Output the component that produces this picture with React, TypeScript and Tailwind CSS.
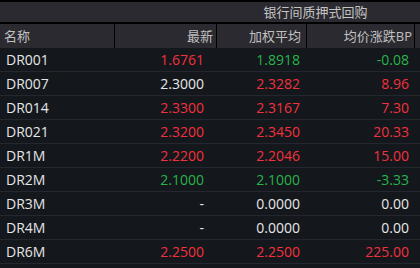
import React from "react";

type Row = { name: string; last: string; lastC: string; avg: string; avgC: string; bp: string; bpC: string };

const R = "text-[#f0323c]";
const G = "text-[#27b54a]";
const W = "text-[#e8e8e8]";

const rows: Row[] = [
  { name: "DR001", last: "1.6761", lastC: R, avg: "1.8918", avgC: G, bp: "-0.08", bpC: G },
  { name: "DR007", last: "2.3000", lastC: W, avg: "2.3282", avgC: R, bp: "8.96", bpC: R },
  { name: "DR014", last: "2.3300", lastC: R, avg: "2.3167", avgC: R, bp: "7.30", bpC: R },
  { name: "DR021", last: "2.3200", lastC: R, avg: "2.3450", avgC: R, bp: "20.33", bpC: R },
  { name: "DR1M", last: "2.2200", lastC: R, avg: "2.2046", avgC: R, bp: "15.00", bpC: R },
  { name: "DR2M", last: "2.1000", lastC: G, avg: "2.1000", avgC: G, bp: "-3.33", bpC: G },
  { name: "DR3M", last: "-", lastC: W, avg: "0.0000", avgC: W, bp: "0.00", bpC: W },
  { name: "DR4M", last: "-", lastC: W, avg: "0.0000", avgC: W, bp: "0.00", bpC: W },
  { name: "DR6M", last: "2.2500", lastC: R, avg: "2.2500", avgC: R, bp: "225.00", bpC: R },
];

const font = { fontFamily: '"Open Sans", "Noto Sans CJK SC", sans-serif' };

export default function App() {
  return (
    <div className="w-[420px] h-[268px] bg-[#14171c] overflow-hidden" style={font}>
      <div className="bg-black pt-[2px] flex flex-col gap-[2px]">
        <div className="h-[20px] bg-[#2b2a30] flex">
          <div className="w-[217px]" />
          <div className="w-[197px] flex items-center justify-center text-[13px] text-[#c4c4c4] leading-none">
            银行间质押式回购
          </div>
        </div>
        <div className="h-[24px] flex gap-px text-[13px] text-[#c0c0c0] leading-none">
          <div className="w-[114px] bg-[#2b2a30] flex items-center pl-[4px]">名称</div>
          <div className="w-[101px] bg-[#2b2a30] flex items-center justify-end pr-[3px]">最新</div>
          <div className="w-[89px] bg-[#2b2a30] flex items-center justify-end pr-[5px]">加权平均</div>
          <div className="w-[107px] bg-[#2b2a30] flex items-center justify-end pr-[2px]">均价涨跌BP</div>
          <div className="flex-1 bg-[#2b2a30]" />
        </div>
      </div>
      <div className="flex flex-col text-[14px] leading-none">
        {rows.map((r) => (
          <div key={r.name} className="h-[24px] flex border-b border-[#24272d]">
            <div className="w-[115px] flex items-center pl-[6px] text-[#e6e6e6]">{r.name}</div>
            <div className={`w-[102px] flex items-center justify-end pr-[13px] ${r.lastC}`}>{r.last}</div>
            <div className={`w-[90px] flex items-center justify-end pr-[7px] ${r.avgC}`}>{r.avg}</div>
            <div className={`w-[108px] flex items-center justify-end pr-[6px] ${r.bpC}`}>{r.bp}</div>
          </div>
        ))}
      </div>
    </div>
  );
}
